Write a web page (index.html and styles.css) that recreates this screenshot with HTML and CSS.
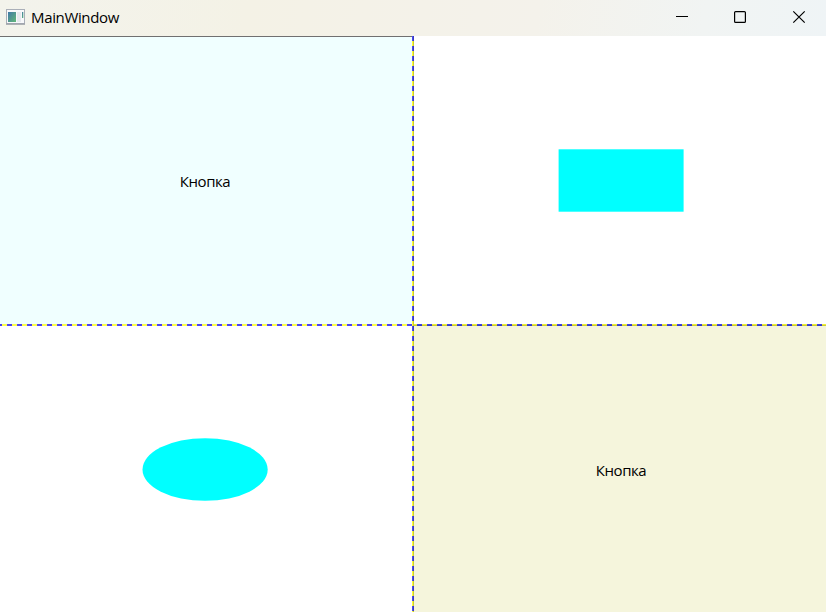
FILE: index.html
```
<!DOCTYPE html>
<html lang="ru">
<head>
<meta charset="utf-8">
<title>MainWindow</title>
<link rel="stylesheet" href="styles.css">
</head>
<body>
<div class="window">
  <header class="titlebar">
    <svg class="app-icon" width="19" height="16" viewBox="0 0 19 16">
      <defs><linearGradient id="g" x1="0" y1="0" x2="1" y2="1"><stop offset="0" stop-color="#4078a8"/><stop offset="1" stop-color="#62b878"/></linearGradient></defs>
      <rect x=".5" y=".5" width="18" height="14" fill="#f7f8fa" stroke="#aaafb8"/>
      <path d="M0 15.2h19" stroke="#8f949c"/>
      <rect x="2" y="3" width="8" height="10" fill="url(#g)"/>
      <rect x="11" y="3" width="4" height="10" fill="#e6e8ed"/>
      <rect x="16" y="3" width="1.3" height="6" fill="url(#g)"/>
    </svg>
    <span class="title">MainWindow</span>
    <div class="controls">
      <svg width="58" height="36" viewBox="0 0 58 36"><path d="M18 16.5h12" stroke="#000"/></svg>
      <svg width="58" height="36" viewBox="0 0 58 36"><rect x="18.6" y="11.6" width="10.8" height="10.8" rx="1" fill="none" stroke="#000" stroke-width="1.2"/></svg>
      <svg width="52" height="36" viewBox="0 0 52 36"><path d="M19.3 11.3l11.4 11.4M30.7 11.3L19.3 22.7" stroke="#000" stroke-width="1.2"/></svg>
    </div>
  </header>
  <main class="grid">
    <div class="cell top-left azure"><span class="label">Кнопка</span></div>
    <div class="cell top-right"><svg width="127" height="64" viewBox="0 0 127 64"><rect x=".6" y=".3" width="125" height="62.4" fill="#0ff"/></svg></div>
    <div class="cell bottom-left"><svg width="127" height="64" viewBox="0 0 127 64"><ellipse cx="63.1" cy="31.5" rx="62.6" ry="31.3" fill="#0ff"/></svg></div>
    <div class="cell bottom-right beige"><span class="label">Кнопка</span></div>
    <div class="line-v"></div>
    <div class="line-h"></div>
    <div class="line-h line-right"></div>
  </main>
</div>
</body>
</html>
```
FILE: styles.css
```
body {
  margin: 0;
  background: #fff;
  font-family: "Open Sans", "Noto Sans", sans-serif;
  color: #000;
}
.window {
  width: 826px;
  height: 612px;
  display: flex;
  flex-direction: column;
  overflow: hidden;
}
.titlebar {
  height: 36px;
  flex: none;
  box-sizing: border-box;
  padding-left: 6px;
  display: flex;
  align-items: center;
  background: linear-gradient(100deg, #f3f3ec 0%, #f4f2e6 30%, #f4f2eb 65%, #f1f4f3 85%, #eff4f6 100%);
}
.app-icon {
  margin: 0 6px 2px 0;
}
.title {
  font-size: 15px;
  letter-spacing: -0.35px;
  line-height: 34px;
  margin-bottom: 2px;
}
.controls {
  margin-left: auto;
  display: flex;
}
.grid {
  flex: 1;
  display: grid;
  grid-template-columns: 412px 2px 412px;
  grid-template-rows: 288px 2px 286px;
}
.cell {
  display: flex;
  align-items: center;
  justify-content: center;
  box-sizing: border-box;
}
.top-left {
  grid-area: 1 / 1;
  padding: 1px 2px 0 0;
}
.top-right {
  grid-area: 1 / 3;
  padding-left: 3px;
  padding-top: 2px;
}
.bottom-left {
  grid-area: 3 / 1;
  padding-right: 1px;
  padding-top: 2px;
}
.bottom-right {
  grid-area: 3 / 3;
  padding-left: 2px;
  padding-top: 2px;
}
.azure {
  background: #f0ffff;
  border-top: 1px solid #707070;
}
.beige {
  background: #f5f5dc;
}
.label {
  font-size: 15px;
  letter-spacing: -0.45px;
  line-height: 20px;
}
.line-v {
  grid-column: 2;
  grid-row: 1 / 4;
  background:
    linear-gradient(90deg, transparent 50%, rgba(0, 0, 0, 0.2) 50%),
    repeating-linear-gradient(180deg, #4848f0 0 5px, #ffff38 5px 10px);
}
.line-h {
  grid-column: 1;
  grid-row: 2;
  background: repeating-linear-gradient(90deg, #5040f0 0 2px, #ffff48 2px 7px, #5040f0 7px 10px);
}
.line-right {
  grid-column: 3;
  background:
    linear-gradient(180deg, transparent 50%, rgba(0, 0, 0, 0.15) 50%),
    repeating-linear-gradient(90deg, #f0f038 0 3px, #4040e8 3px 8px, #f0f038 8px 10px);
}
```
